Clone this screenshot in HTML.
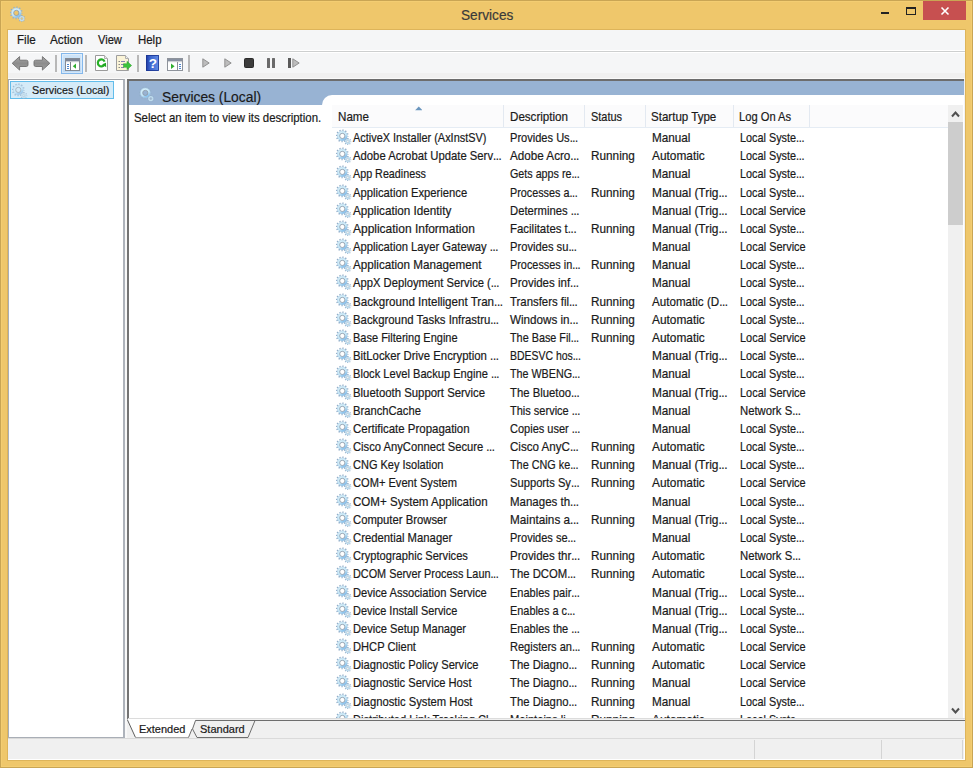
<!DOCTYPE html>
<html><head><meta charset="utf-8">
<style>
*{box-sizing:border-box}
html,body{margin:0;padding:0}
body{width:973px;height:768px;overflow:hidden;position:relative;background:#EFC76B;font-family:"Liberation Sans",sans-serif;color:#1a1a1a}
.a{position:absolute}
.t{position:absolute;white-space:nowrap;line-height:1;-webkit-text-stroke:.2px currentColor;transform-origin:0 0}
.t b{font-weight:normal;letter-spacing:-.4px}
#client{left:8px;top:30px;width:957px;height:730px;background:#F0F0F0}
#menubar{left:8px;top:30px;width:957px;height:21px;background:#F5F6F7}
#menuline{left:8px;top:50px;width:957px;height:3px;background:#CDCFCF;border-top:1px solid #fff;border-bottom:1px solid #fff}
#toolbar{left:8px;top:53px;width:957px;height:20px;background:#F5F6F7}
#lpane{left:8px;top:79px;width:117px;height:659px;background:#fff;border:1px solid #A9AEB6;border-right:2px solid #AEB3BB;border-top-color:#A0A3A8}
#rpane{left:127px;top:79px;width:838px;height:641px;background:#fff;border-top:2px solid #6D6D6D;border-left:2px solid #747474}
#pgap{left:125px;top:79px;width:2px;height:659px;background:#F8F8F8}
#band{left:8px;top:78px;width:957px;height:1px;background:#FAFAFA}
#bluebar{left:129px;top:81px;width:835px;height:24px;background:#98B3D3}
#listtab{left:322px;top:95px;width:642px;height:625px;background:#fff;border-top-left-radius:10px}
#lhdr{left:332px;top:105px;width:616px;height:23px;background:#FBFBFC;border-bottom:1px solid #E5ECF4}
.vd{position:absolute;top:105px;width:1px;height:22px;background:#E3E9F1}
#sb{left:948px;top:105px;width:15px;height:614px;background:#F0F0F0}
#thumb{left:948px;top:122px;width:14.5px;height:103px;background:#CDCDCD}
#bline{left:128px;top:718px;width:837px;height:1px;background:#DCDCDC}
#status{left:8px;top:738px;width:957px;height:22px;background:#F0F0F0;border-top:1px solid #DADADA;border-bottom:1px solid #fff;border-right:1px solid #fff}
.menu{font-size:12.1px;top:34px;transform:scaleX(.94);transform-origin:0 0;color:#1a1a1a}
.r{position:absolute;left:0;height:18px;width:620px}
.r span{position:absolute;top:4px;font-size:12.1px;line-height:1;white-space:nowrap;-webkit-text-stroke:.2px currentColor;transform:scaleX(.92);transform-origin:0 0}
.gi{position:absolute;left:336px;top:1px;width:16px;height:16px}
.c1{left:353px}.c2{left:510px}.c3{left:591px}.c4{left:651.7px}.c5{left:739.5px}
.r b{font-weight:normal;letter-spacing:-.4px}
#rows{position:absolute;left:0;top:128px;width:973px;height:590px;overflow:hidden}
</style></head><body>
<svg width="0" height="0" style="position:absolute">
<defs>
<linearGradient id="gg" x1="0" y1="0" x2="0.6" y2="1"><stop offset="0" stop-color="#D6F0FB"/><stop offset="0.7" stop-color="#C3E6F8"/><stop offset="1" stop-color="#8CC4EE"/></linearGradient>
<symbol id="gear" viewBox="0 0 16 16">
<circle cx="6.3" cy="6.9" r="5.6" fill="none" stroke="#93AFCA" stroke-width="1.7" stroke-dasharray="1.25 1.682" stroke-dashoffset="0.625"/>
<circle cx="6.3" cy="6.9" r="3.75" fill="none" stroke="url(#gg)" stroke-width="2.5"/>
<circle cx="6.3" cy="6.9" r="4.95" fill="none" stroke="#A6C6DF" stroke-width="0.5"/>
<circle cx="6.3" cy="6.9" r="2.6" fill="none" stroke="#8B97A5" stroke-width="0.8"/>
<circle cx="11.8" cy="12.6" r="2.9" fill="none" stroke="#93AFCA" stroke-width="1.3" stroke-dasharray="1.05 1.228" stroke-dashoffset="0.525"/>
<circle cx="11.8" cy="12.6" r="1.85" fill="none" stroke="#BFDDEF" stroke-width="1.5"/>
<circle cx="11.8" cy="12.6" r="1" fill="none" stroke="#A9B8C6" stroke-width="0.5"/>
</symbol>
</defs></svg>

<!-- window frame -->
<div class="a" style="left:1px;top:1px;width:971px;height:766px;border:1px solid #F3CD72"></div>
<div class="a" style="left:0;top:0;width:973px;height:1px;background:#C9A554"></div>
<div class="a" style="left:0;top:0;width:1px;height:768px;background:#C9A554"></div>
<div class="a" style="left:972px;top:0;width:1px;height:768px;background:#C9A554"></div>
<div class="a" style="left:0;top:767px;width:973px;height:1px;background:#C9A554"></div>
<svg class="a" style="left:9.5px;top:6.2px" width="16" height="16" viewBox="0 0 16 16"><use href="#gear"/></svg>
<!-- caption buttons -->
<div class="a" style="left:881px;top:12px;width:8px;height:2px;background:#222"></div>
<div class="a" style="left:906px;top:7px;width:10px;height:8px;border:1px solid #222;border-top-width:2px"></div>
<div class="a" style="left:923px;top:1px;width:43px;height:19px;background:#C75050"></div>
<svg class="a" style="left:940px;top:6px" width="10" height="10" viewBox="0 0 10 10"><path d="M1.5 1.5L8.5 8.5M8.5 1.5L1.5 8.5" stroke="#fff" stroke-width="1.6"/></svg>

<div class="a" style="left:7px;top:29px;width:959px;height:732px;border:1px solid #DDB45A"></div>
<div id="client" class="a"></div>
<div id="menubar" class="a"></div>
<div id="menuline" class="a"></div>
<div id="toolbar" class="a"></div>

<!-- toolbar icons -->
<svg class="a" style="left:11px;top:55px" width="18" height="17" viewBox="0 0 18 17"><defs><linearGradient id="ag" x1="0" y1="0" x2="0" y2="1"><stop offset="0" stop-color="#A8A8A8"/><stop offset=".5" stop-color="#8C8C8C"/><stop offset="1" stop-color="#A0A0A0"/></linearGradient></defs><path d="M1.2 8.3L8.6 1.6V5.2H15.4Q17 5.2 17 6.8V9.8Q17 11.5 15.4 11.5H8.6V15.1Z" fill="url(#ag)" stroke="#6F6F6F" stroke-width="0.9" stroke-linejoin="round"/></svg>
<svg class="a" style="left:33px;top:55px" width="18" height="17" viewBox="0 0 18 17"><path d="M16.8 8.3L9.4 1.6V5.2H2.6Q1 5.2 1 6.8V9.8Q1 11.5 2.6 11.5H9.4V15.1Z" fill="url(#ag)" stroke="#6F6F6F" stroke-width="0.9" stroke-linejoin="round"/></svg>
<div class="a" style="left:55px;top:55px;width:2px;height:17px;background:#B8B8B8"></div>
<div class="a" style="left:61px;top:53px;width:22px;height:21px;background:linear-gradient(#CFE5F9,#BCD9F5);border:1.5px solid #84B8EC;box-shadow:inset 0 0 0 1px rgba(255,255,255,.35)"></div>
<svg class="a" style="left:65px;top:58px" width="15" height="13" viewBox="0 0 15 13"><rect x="0.5" y="0.5" width="14" height="12" fill="#fff" stroke="#858B95"/><rect x="1" y="1" width="13" height="2" fill="#7C8698"/><rect x="1" y="3" width="13" height="1.2" fill="#C8CCD2"/><rect x="5" y="4" width="1" height="8.5" fill="#7A7F88"/><path d="M2 6.5h2M2 8.5h2M2 10.5h2" stroke="#4D86CF"/><path d="M11 5.6V10.8L7.8 8.2Z" fill="#2FAE2F"/></svg>
<div class="a" style="left:85px;top:55px;width:2px;height:17px;background:#B8B8B8"></div>
<svg class="a" style="left:95px;top:55px" width="13" height="16" viewBox="0 0 13 16"><path d="M0.5 0.5H9.5L12.5 3.5V15.5H0.5Z" fill="#fff" stroke="#9A9A9A"/><path d="M9.5 0.5V3.5H12.5" fill="#E8E8E8" stroke="#B0B0B0"/><path d="M9.4 9.6A3.5 3.5 0 1 1 9.6 6.6" fill="none" stroke="#27B027" stroke-width="2.2"/><path d="M7.2 9.2L11.2 12.3L11 7.8Z" fill="#1FA51F"/></svg>
<svg class="a" style="left:116px;top:55px" width="16" height="16" viewBox="0 0 16 16"><path d="M0.5 0.5H9.5L12.5 3.5V15.5H0.5Z" fill="#FBF4D8" stroke="#9E9E9E"/><path d="M9.5 0.5V3.5H12.5" fill="#EEE" stroke="#B0B0B0"/><path d="M2.5 6.5h1.5M2.5 9.5h1.5M2.5 12.5h1.5" stroke="#8A8A8A"/><path d="M5 6.5h4M5 9.5h3M5 12.5h3" stroke="#8884B4"/><path d="M7.5 8.7H11V6.3L15.6 10.5L11 14.7V12.3H7.5Z" fill="#3CC33C" stroke="#2A9F2A" stroke-width=".5"/></svg>
<div class="a" style="left:137px;top:55px;width:2px;height:17px;background:#B8B8B8"></div>
<svg class="a" style="left:146px;top:55px" width="13" height="16" viewBox="0 0 13 16"><defs><linearGradient id="hg" x1="0" y1="0" x2="1" y2="0"><stop offset="0" stop-color="#1A37A0"/><stop offset=".3" stop-color="#3A62CC"/><stop offset="1" stop-color="#628EE6"/></linearGradient></defs><rect x="0" y="0" width="13" height="16" rx="0.8" fill="url(#hg)"/><rect x="0.5" y="0.5" width="12" height="15" fill="none" stroke="#1B3591" stroke-width=".8"/><text x="6.9" y="12.6" font-family="Liberation Sans" font-size="13.5" font-weight="bold" fill="#fff" text-anchor="middle">?</text></svg>
<svg class="a" style="left:167px;top:58px" width="16" height="13" viewBox="0 0 16 13"><rect x="0.5" y="0.5" width="15" height="12" fill="#fff" stroke="#8E939B"/><rect x="1" y="1" width="14" height="2" fill="#8790A0"/><rect x="1" y="3" width="14" height="1.2" fill="#CDD0D5"/><rect x="10" y="4" width="1" height="8.5" fill="#8A8F96"/><path d="M12 6.5h2M12 8.5h2M12 10.5h2" stroke="#4D86CF"/><path d="M4 5.6V11L7.6 8.3Z" fill="#2FAE2F"/></svg>
<div class="a" style="left:188px;top:55px;width:2px;height:17px;background:#B8B8B8"></div>
<svg class="a" style="left:202px;top:58px" width="8" height="10" viewBox="0 0 8 10"><path d="M0.8 0.8V9.2L7.2 5Z" fill="#BDBDBD" stroke="#8A8A8A" stroke-width="0.9"/></svg>
<svg class="a" style="left:224px;top:58px" width="8" height="10" viewBox="0 0 8 10"><path d="M0.8 0.8V9.2L7.2 5Z" fill="#BDBDBD" stroke="#8A8A8A" stroke-width="0.9"/></svg>
<div class="a" style="left:244px;top:58px;width:10px;height:10px;background:#3C3C3C;border:1px solid #2A2A2A;border-radius:1.5px"></div>
<div class="a" style="left:267px;top:58px;width:3px;height:10px;background:#6A6A6A;border-radius:.5px"></div>
<div class="a" style="left:272px;top:58px;width:3px;height:10px;background:#6A6A6A;border-radius:.5px"></div>
<div class="a" style="left:288px;top:58px;width:3px;height:10px;background:#5A5A5A"></div>
<svg class="a" style="left:292px;top:58px" width="8" height="10" viewBox="0 0 8 10"><path d="M0.8 0.8V9.2L7.2 5Z" fill="#BDBDBD" stroke="#8A8A8A" stroke-width="0.9"/></svg>

<!-- left pane -->
<div id="band" class="a"></div>
<div id="lpane" class="a"></div>
<div class="a" style="left:10px;top:81px;width:104px;height:18px;background:#D5EBF8;border:1.5px solid #62BDEB"></div>
<svg class="a" style="left:12px;top:83px;opacity:.75" width="16" height="16" viewBox="0 0 16 16"><use href="#gear"/></svg>

<!-- right pane -->
<div id="pgap" class="a"></div>
<div id="rpane" class="a"></div>
<div id="bluebar" class="a"></div>
<svg class="a" style="left:138.7px;top:85.7px" width="16" height="16" viewBox="0 0 16 16"><use href="#gear"/></svg>
<div id="listtab" class="a"></div>
<div id="lhdr" class="a"></div>
<svg class="a" style="left:414.7px;top:106px" width="7.5" height="4.5" viewBox="0 0 8 5"><path d="M0 4.7L4 0.5L8 4.7Z" fill="#6A96BE"/></svg>
<div class="vd" style="left:503px"></div>
<div class="vd" style="left:584px"></div>
<div class="vd" style="left:645px"></div>
<div class="vd" style="left:733px"></div>
<div class="vd" style="left:809px"></div>
<div id="rows">
<div style="position:absolute;left:0;top:-128px;width:973px">
<div style="position:absolute;left:0;top:128px">
<svg class="gi" style="top:1.00px"><use href="#gear"/></svg>
<svg class="gi" style="top:19.18px"><use href="#gear"/></svg>
<svg class="gi" style="top:37.36px"><use href="#gear"/></svg>
<svg class="gi" style="top:55.54px"><use href="#gear"/></svg>
<svg class="gi" style="top:73.72px"><use href="#gear"/></svg>
<svg class="gi" style="top:91.90px"><use href="#gear"/></svg>
<svg class="gi" style="top:110.08px"><use href="#gear"/></svg>
<svg class="gi" style="top:128.26px"><use href="#gear"/></svg>
<svg class="gi" style="top:146.44px"><use href="#gear"/></svg>
<svg class="gi" style="top:164.62px"><use href="#gear"/></svg>
<svg class="gi" style="top:182.80px"><use href="#gear"/></svg>
<svg class="gi" style="top:200.98px"><use href="#gear"/></svg>
<svg class="gi" style="top:219.16px"><use href="#gear"/></svg>
<svg class="gi" style="top:237.34px"><use href="#gear"/></svg>
<svg class="gi" style="top:255.52px"><use href="#gear"/></svg>
<svg class="gi" style="top:273.70px"><use href="#gear"/></svg>
<svg class="gi" style="top:291.88px"><use href="#gear"/></svg>
<svg class="gi" style="top:310.06px"><use href="#gear"/></svg>
<svg class="gi" style="top:328.24px"><use href="#gear"/></svg>
<svg class="gi" style="top:346.42px"><use href="#gear"/></svg>
<svg class="gi" style="top:364.60px"><use href="#gear"/></svg>
<svg class="gi" style="top:382.78px"><use href="#gear"/></svg>
<svg class="gi" style="top:400.96px"><use href="#gear"/></svg>
<svg class="gi" style="top:419.14px"><use href="#gear"/></svg>
<svg class="gi" style="top:437.32px"><use href="#gear"/></svg>
<svg class="gi" style="top:455.50px"><use href="#gear"/></svg>
<svg class="gi" style="top:473.68px"><use href="#gear"/></svg>
<svg class="gi" style="top:491.86px"><use href="#gear"/></svg>
<svg class="gi" style="top:510.04px"><use href="#gear"/></svg>
<svg class="gi" style="top:528.22px"><use href="#gear"/></svg>
<svg class="gi" style="top:546.40px"><use href="#gear"/></svg>
<svg class="gi" style="top:564.58px"><use href="#gear"/></svg>
<svg class="gi" style="top:582.76px"><use href="#gear"/></svg>
<div class="t" style="left:353.40px;top:4.00px;font-size:12.1px;transform:scaleX(0.902)">ActiveX Installer (AxInstSV)</div>
<div class="t" style="left:510.30px;top:4.00px;font-size:12.1px;transform:scaleX(0.915)">Provides Us<b>...</b></div>
<div class="t" style="left:651.80px;top:4.00px;font-size:12.1px;transform:scaleX(0.969)">Manual</div>
<div class="t" style="left:740.00px;top:4.00px;font-size:12.1px;transform:scaleX(0.897)">Local Syste<b>...</b></div>
<div class="t" style="left:353.40px;top:22.18px;font-size:12.1px;transform:scaleX(0.934)">Adobe Acrobat Update Serv<b>...</b></div>
<div class="t" style="left:510.30px;top:22.18px;font-size:12.1px;transform:scaleX(0.965)">Adobe Acro<b>...</b></div>
<div class="t" style="left:591.40px;top:22.18px;font-size:12.1px;transform:scaleX(0.974)">Running</div>
<div class="t" style="left:651.80px;top:22.18px;font-size:12.1px;transform:scaleX(0.982)">Automatic</div>
<div class="t" style="left:740.00px;top:22.18px;font-size:12.1px;transform:scaleX(0.897)">Local Syste<b>...</b></div>
<div class="t" style="left:353.40px;top:40.36px;font-size:12.1px;transform:scaleX(0.889)">App Readiness</div>
<div class="t" style="left:510.30px;top:40.36px;font-size:12.1px;transform:scaleX(0.887)">Gets apps re<b>...</b></div>
<div class="t" style="left:651.80px;top:40.36px;font-size:12.1px;transform:scaleX(0.969)">Manual</div>
<div class="t" style="left:740.00px;top:40.36px;font-size:12.1px;transform:scaleX(0.897)">Local Syste<b>...</b></div>
<div class="t" style="left:353.40px;top:58.54px;font-size:12.1px;transform:scaleX(0.928)">Application Experience</div>
<div class="t" style="left:510.30px;top:58.54px;font-size:12.1px;transform:scaleX(0.893)">Processes a<b>...</b></div>
<div class="t" style="left:591.40px;top:58.54px;font-size:12.1px;transform:scaleX(0.974)">Running</div>
<div class="t" style="left:651.80px;top:58.54px;font-size:12.1px;transform:scaleX(0.985)">Manual (Trig<b>...</b></div>
<div class="t" style="left:740.00px;top:58.54px;font-size:12.1px;transform:scaleX(0.897)">Local Syste<b>...</b></div>
<div class="t" style="left:353.40px;top:76.72px;font-size:12.1px;transform:scaleX(0.968)">Application Identity</div>
<div class="t" style="left:510.30px;top:76.72px;font-size:12.1px;transform:scaleX(0.931)">Determines <b>...</b></div>
<div class="t" style="left:651.80px;top:76.72px;font-size:12.1px;transform:scaleX(0.985)">Manual (Trig<b>...</b></div>
<div class="t" style="left:740.00px;top:76.72px;font-size:12.1px;transform:scaleX(0.904)">Local Service</div>
<div class="t" style="left:353.40px;top:94.90px;font-size:12.1px;transform:scaleX(0.990)">Application Information</div>
<div class="t" style="left:510.30px;top:94.90px;font-size:12.1px;transform:scaleX(0.945)">Facilitates t<b>...</b></div>
<div class="t" style="left:591.40px;top:94.90px;font-size:12.1px;transform:scaleX(0.974)">Running</div>
<div class="t" style="left:651.80px;top:94.90px;font-size:12.1px;transform:scaleX(0.985)">Manual (Trig<b>...</b></div>
<div class="t" style="left:740.00px;top:94.90px;font-size:12.1px;transform:scaleX(0.897)">Local Syste<b>...</b></div>
<div class="t" style="left:353.40px;top:113.08px;font-size:12.1px;transform:scaleX(0.929)">Application Layer Gateway <b>...</b></div>
<div class="t" style="left:510.30px;top:113.08px;font-size:12.1px;transform:scaleX(0.924)">Provides su<b>...</b></div>
<div class="t" style="left:651.80px;top:113.08px;font-size:12.1px;transform:scaleX(0.969)">Manual</div>
<div class="t" style="left:740.00px;top:113.08px;font-size:12.1px;transform:scaleX(0.904)">Local Service</div>
<div class="t" style="left:353.40px;top:131.26px;font-size:12.1px;transform:scaleX(0.965)">Application Management</div>
<div class="t" style="left:510.30px;top:131.26px;font-size:12.1px;transform:scaleX(0.899)">Processes in<b>...</b></div>
<div class="t" style="left:591.40px;top:131.26px;font-size:12.1px;transform:scaleX(0.974)">Running</div>
<div class="t" style="left:651.80px;top:131.26px;font-size:12.1px;transform:scaleX(0.969)">Manual</div>
<div class="t" style="left:740.00px;top:131.26px;font-size:12.1px;transform:scaleX(0.897)">Local Syste<b>...</b></div>
<div class="t" style="left:353.40px;top:149.44px;font-size:12.1px;transform:scaleX(0.928)">AppX Deployment Service (<b>...</b></div>
<div class="t" style="left:510.30px;top:149.44px;font-size:12.1px;transform:scaleX(0.951)">Provides inf<b>...</b></div>
<div class="t" style="left:651.80px;top:149.44px;font-size:12.1px;transform:scaleX(0.969)">Manual</div>
<div class="t" style="left:740.00px;top:149.44px;font-size:12.1px;transform:scaleX(0.897)">Local Syste<b>...</b></div>
<div class="t" style="left:353.40px;top:167.62px;font-size:12.1px;transform:scaleX(0.958)">Background Intelligent Tran<b>...</b></div>
<div class="t" style="left:510.30px;top:167.62px;font-size:12.1px;transform:scaleX(0.941)">Transfers fil<b>...</b></div>
<div class="t" style="left:591.40px;top:167.62px;font-size:12.1px;transform:scaleX(0.974)">Running</div>
<div class="t" style="left:651.80px;top:167.62px;font-size:12.1px;transform:scaleX(0.961)">Automatic (D<b>...</b></div>
<div class="t" style="left:740.00px;top:167.62px;font-size:12.1px;transform:scaleX(0.897)">Local Syste<b>...</b></div>
<div class="t" style="left:353.40px;top:185.80px;font-size:12.1px;transform:scaleX(0.938)">Background Tasks Infrastru<b>...</b></div>
<div class="t" style="left:510.30px;top:185.80px;font-size:12.1px;transform:scaleX(0.964)">Windows in<b>...</b></div>
<div class="t" style="left:591.40px;top:185.80px;font-size:12.1px;transform:scaleX(0.974)">Running</div>
<div class="t" style="left:651.80px;top:185.80px;font-size:12.1px;transform:scaleX(0.982)">Automatic</div>
<div class="t" style="left:740.00px;top:185.80px;font-size:12.1px;transform:scaleX(0.897)">Local Syste<b>...</b></div>
<div class="t" style="left:353.40px;top:203.98px;font-size:12.1px;transform:scaleX(0.910)">Base Filtering Engine</div>
<div class="t" style="left:510.30px;top:203.98px;font-size:12.1px;transform:scaleX(0.895)">The Base Fil<b>...</b></div>
<div class="t" style="left:591.40px;top:203.98px;font-size:12.1px;transform:scaleX(0.974)">Running</div>
<div class="t" style="left:651.80px;top:203.98px;font-size:12.1px;transform:scaleX(0.982)">Automatic</div>
<div class="t" style="left:740.00px;top:203.98px;font-size:12.1px;transform:scaleX(0.904)">Local Service</div>
<div class="t" style="left:353.40px;top:222.16px;font-size:12.1px;transform:scaleX(0.940)">BitLocker Drive Encryption <b>...</b></div>
<div class="t" style="left:510.30px;top:222.16px;font-size:12.1px;transform:scaleX(0.865)">BDESVC hos<b>...</b></div>
<div class="t" style="left:651.80px;top:222.16px;font-size:12.1px;transform:scaleX(0.985)">Manual (Trig<b>...</b></div>
<div class="t" style="left:740.00px;top:222.16px;font-size:12.1px;transform:scaleX(0.897)">Local Syste<b>...</b></div>
<div class="t" style="left:353.40px;top:240.34px;font-size:12.1px;transform:scaleX(0.920)">Block Level Backup Engine <b>...</b></div>
<div class="t" style="left:510.30px;top:240.34px;font-size:12.1px;transform:scaleX(0.887)">The WBENG<b>...</b></div>
<div class="t" style="left:651.80px;top:240.34px;font-size:12.1px;transform:scaleX(0.969)">Manual</div>
<div class="t" style="left:740.00px;top:240.34px;font-size:12.1px;transform:scaleX(0.897)">Local Syste<b>...</b></div>
<div class="t" style="left:353.40px;top:258.52px;font-size:12.1px;transform:scaleX(0.940)">Bluetooth Support Service</div>
<div class="t" style="left:510.30px;top:258.52px;font-size:12.1px;transform:scaleX(0.935)">The Bluetoo<b>...</b></div>
<div class="t" style="left:651.80px;top:258.52px;font-size:12.1px;transform:scaleX(0.985)">Manual (Trig<b>...</b></div>
<div class="t" style="left:740.00px;top:258.52px;font-size:12.1px;transform:scaleX(0.904)">Local Service</div>
<div class="t" style="left:353.40px;top:276.70px;font-size:12.1px;transform:scaleX(0.926)">BranchCache</div>
<div class="t" style="left:510.30px;top:276.70px;font-size:12.1px;transform:scaleX(0.910)">This service <b>...</b></div>
<div class="t" style="left:651.80px;top:276.70px;font-size:12.1px;transform:scaleX(0.969)">Manual</div>
<div class="t" style="left:740.00px;top:276.70px;font-size:12.1px;transform:scaleX(0.936)">Network S<b>...</b></div>
<div class="t" style="left:353.40px;top:294.88px;font-size:12.1px;transform:scaleX(0.948)">Certificate Propagation</div>
<div class="t" style="left:510.30px;top:294.88px;font-size:12.1px;transform:scaleX(0.910)">Copies user <b>...</b></div>
<div class="t" style="left:651.80px;top:294.88px;font-size:12.1px;transform:scaleX(0.969)">Manual</div>
<div class="t" style="left:740.00px;top:294.88px;font-size:12.1px;transform:scaleX(0.897)">Local Syste<b>...</b></div>
<div class="t" style="left:353.40px;top:313.06px;font-size:12.1px;transform:scaleX(0.927)">Cisco AnyConnect Secure <b>...</b></div>
<div class="t" style="left:510.30px;top:313.06px;font-size:12.1px;transform:scaleX(0.958)">Cisco AnyC<b>...</b></div>
<div class="t" style="left:591.40px;top:313.06px;font-size:12.1px;transform:scaleX(0.974)">Running</div>
<div class="t" style="left:651.80px;top:313.06px;font-size:12.1px;transform:scaleX(0.982)">Automatic</div>
<div class="t" style="left:740.00px;top:313.06px;font-size:12.1px;transform:scaleX(0.897)">Local Syste<b>...</b></div>
<div class="t" style="left:353.40px;top:331.24px;font-size:12.1px;transform:scaleX(0.909)">CNG Key Isolation</div>
<div class="t" style="left:510.30px;top:331.24px;font-size:12.1px;transform:scaleX(0.895)">The CNG ke<b>...</b></div>
<div class="t" style="left:591.40px;top:331.24px;font-size:12.1px;transform:scaleX(0.974)">Running</div>
<div class="t" style="left:651.80px;top:331.24px;font-size:12.1px;transform:scaleX(0.985)">Manual (Trig<b>...</b></div>
<div class="t" style="left:740.00px;top:331.24px;font-size:12.1px;transform:scaleX(0.897)">Local Syste<b>...</b></div>
<div class="t" style="left:353.40px;top:349.42px;font-size:12.1px;transform:scaleX(0.918)">COM+ Event System</div>
<div class="t" style="left:510.30px;top:349.42px;font-size:12.1px;transform:scaleX(0.925)">Supports Sy<b>...</b></div>
<div class="t" style="left:591.40px;top:349.42px;font-size:12.1px;transform:scaleX(0.974)">Running</div>
<div class="t" style="left:651.80px;top:349.42px;font-size:12.1px;transform:scaleX(0.982)">Automatic</div>
<div class="t" style="left:740.00px;top:349.42px;font-size:12.1px;transform:scaleX(0.904)">Local Service</div>
<div class="t" style="left:353.40px;top:367.60px;font-size:12.1px;transform:scaleX(0.956)">COM+ System Application</div>
<div class="t" style="left:510.30px;top:367.60px;font-size:12.1px;transform:scaleX(0.951)">Manages th<b>...</b></div>
<div class="t" style="left:651.80px;top:367.60px;font-size:12.1px;transform:scaleX(0.969)">Manual</div>
<div class="t" style="left:740.00px;top:367.60px;font-size:12.1px;transform:scaleX(0.897)">Local Syste<b>...</b></div>
<div class="t" style="left:353.40px;top:385.78px;font-size:12.1px;transform:scaleX(0.933)">Computer Browser</div>
<div class="t" style="left:510.30px;top:385.78px;font-size:12.1px;transform:scaleX(0.971)">Maintains a<b>...</b></div>
<div class="t" style="left:591.40px;top:385.78px;font-size:12.1px;transform:scaleX(0.974)">Running</div>
<div class="t" style="left:651.80px;top:385.78px;font-size:12.1px;transform:scaleX(0.985)">Manual (Trig<b>...</b></div>
<div class="t" style="left:740.00px;top:385.78px;font-size:12.1px;transform:scaleX(0.897)">Local Syste<b>...</b></div>
<div class="t" style="left:353.40px;top:403.96px;font-size:12.1px;transform:scaleX(0.934)">Credential Manager</div>
<div class="t" style="left:510.30px;top:403.96px;font-size:12.1px;transform:scaleX(0.910)">Provides se<b>...</b></div>
<div class="t" style="left:651.80px;top:403.96px;font-size:12.1px;transform:scaleX(0.969)">Manual</div>
<div class="t" style="left:740.00px;top:403.96px;font-size:12.1px;transform:scaleX(0.897)">Local Syste<b>...</b></div>
<div class="t" style="left:353.40px;top:422.14px;font-size:12.1px;transform:scaleX(0.919)">Cryptographic Services</div>
<div class="t" style="left:510.30px;top:422.14px;font-size:12.1px;transform:scaleX(0.950)">Provides thr<b>...</b></div>
<div class="t" style="left:591.40px;top:422.14px;font-size:12.1px;transform:scaleX(0.974)">Running</div>
<div class="t" style="left:651.80px;top:422.14px;font-size:12.1px;transform:scaleX(0.982)">Automatic</div>
<div class="t" style="left:740.00px;top:422.14px;font-size:12.1px;transform:scaleX(0.936)">Network S<b>...</b></div>
<div class="t" style="left:353.40px;top:440.32px;font-size:12.1px;transform:scaleX(0.897)">DCOM Server Process Laun<b>...</b></div>
<div class="t" style="left:510.30px;top:440.32px;font-size:12.1px;transform:scaleX(0.936)">The DCOM<b>...</b></div>
<div class="t" style="left:591.40px;top:440.32px;font-size:12.1px;transform:scaleX(0.974)">Running</div>
<div class="t" style="left:651.80px;top:440.32px;font-size:12.1px;transform:scaleX(0.982)">Automatic</div>
<div class="t" style="left:740.00px;top:440.32px;font-size:12.1px;transform:scaleX(0.897)">Local Syste<b>...</b></div>
<div class="t" style="left:353.40px;top:458.50px;font-size:12.1px;transform:scaleX(0.921)">Device Association Service</div>
<div class="t" style="left:510.30px;top:458.50px;font-size:12.1px;transform:scaleX(0.912)">Enables pair<b>...</b></div>
<div class="t" style="left:651.80px;top:458.50px;font-size:12.1px;transform:scaleX(0.985)">Manual (Trig<b>...</b></div>
<div class="t" style="left:740.00px;top:458.50px;font-size:12.1px;transform:scaleX(0.897)">Local Syste<b>...</b></div>
<div class="t" style="left:353.40px;top:476.68px;font-size:12.1px;transform:scaleX(0.902)">Device Install Service</div>
<div class="t" style="left:510.30px;top:476.68px;font-size:12.1px;transform:scaleX(0.901)">Enables a c<b>...</b></div>
<div class="t" style="left:651.80px;top:476.68px;font-size:12.1px;transform:scaleX(0.985)">Manual (Trig<b>...</b></div>
<div class="t" style="left:740.00px;top:476.68px;font-size:12.1px;transform:scaleX(0.897)">Local Syste<b>...</b></div>
<div class="t" style="left:353.40px;top:494.86px;font-size:12.1px;transform:scaleX(0.919)">Device Setup Manager</div>
<div class="t" style="left:510.30px;top:494.86px;font-size:12.1px;transform:scaleX(0.912)">Enables the <b>...</b></div>
<div class="t" style="left:651.80px;top:494.86px;font-size:12.1px;transform:scaleX(0.985)">Manual (Trig<b>...</b></div>
<div class="t" style="left:740.00px;top:494.86px;font-size:12.1px;transform:scaleX(0.897)">Local Syste<b>...</b></div>
<div class="t" style="left:353.40px;top:513.04px;font-size:12.1px;transform:scaleX(0.921)">DHCP Client</div>
<div class="t" style="left:510.30px;top:513.04px;font-size:12.1px;transform:scaleX(0.912)">Registers an<b>...</b></div>
<div class="t" style="left:591.40px;top:513.04px;font-size:12.1px;transform:scaleX(0.974)">Running</div>
<div class="t" style="left:651.80px;top:513.04px;font-size:12.1px;transform:scaleX(0.982)">Automatic</div>
<div class="t" style="left:740.00px;top:513.04px;font-size:12.1px;transform:scaleX(0.904)">Local Service</div>
<div class="t" style="left:353.40px;top:531.22px;font-size:12.1px;transform:scaleX(0.924)">Diagnostic Policy Service</div>
<div class="t" style="left:510.30px;top:531.22px;font-size:12.1px;transform:scaleX(0.935)">The Diagno<b>...</b></div>
<div class="t" style="left:591.40px;top:531.22px;font-size:12.1px;transform:scaleX(0.974)">Running</div>
<div class="t" style="left:651.80px;top:531.22px;font-size:12.1px;transform:scaleX(0.982)">Automatic</div>
<div class="t" style="left:740.00px;top:531.22px;font-size:12.1px;transform:scaleX(0.904)">Local Service</div>
<div class="t" style="left:353.40px;top:549.40px;font-size:12.1px;transform:scaleX(0.923)">Diagnostic Service Host</div>
<div class="t" style="left:510.30px;top:549.40px;font-size:12.1px;transform:scaleX(0.935)">The Diagno<b>...</b></div>
<div class="t" style="left:591.40px;top:549.40px;font-size:12.1px;transform:scaleX(0.974)">Running</div>
<div class="t" style="left:651.80px;top:549.40px;font-size:12.1px;transform:scaleX(0.969)">Manual</div>
<div class="t" style="left:740.00px;top:549.40px;font-size:12.1px;transform:scaleX(0.904)">Local Service</div>
<div class="t" style="left:353.40px;top:567.58px;font-size:12.1px;transform:scaleX(0.930)">Diagnostic System Host</div>
<div class="t" style="left:510.30px;top:567.58px;font-size:12.1px;transform:scaleX(0.935)">The Diagno<b>...</b></div>
<div class="t" style="left:591.40px;top:567.58px;font-size:12.1px;transform:scaleX(0.974)">Running</div>
<div class="t" style="left:651.80px;top:567.58px;font-size:12.1px;transform:scaleX(0.969)">Manual</div>
<div class="t" style="left:740.00px;top:567.58px;font-size:12.1px;transform:scaleX(0.897)">Local Syste<b>...</b></div>
<div class="t" style="left:353.40px;top:585.76px;font-size:12.1px;transform:scaleX(0.920)">Distributed Link Tracking Cl<b>...</b></div>
<div class="t" style="left:510.30px;top:585.76px;font-size:12.1px;transform:scaleX(0.920)">Maintains li<b>...</b></div>
<div class="t" style="left:591.40px;top:585.76px;font-size:12.1px;transform:scaleX(0.974)">Running</div>
<div class="t" style="left:651.80px;top:585.76px;font-size:12.1px;transform:scaleX(0.982)">Automatic</div>
<div class="t" style="left:740.00px;top:585.76px;font-size:12.1px;transform:scaleX(0.897)">Local Syste<b>...</b></div>
</div></div></div>
<div id="sb" class="a"></div>
<div class="a" style="left:963.5px;top:79px;width:1.5px;height:641px;background:#F2F2F2"></div>
<div id="thumb" class="a"></div>
<svg class="a" style="left:951px;top:110px" width="9" height="8" viewBox="0 0 9 8"><path d="M1 6.5L4.5 2.5L8 6.5" fill="none" stroke="#505050" stroke-width="2"/></svg>
<svg class="a" style="left:951px;top:706.5px" width="9" height="8" viewBox="0 0 9 8"><path d="M1 1.5L4.5 5.5L8 1.5" fill="none" stroke="#505050" stroke-width="2"/></svg>
<div id="bline" class="a"></div>

<!-- tabs -->
<div class="a" style="left:128px;top:719px;width:837px;height:19px;background:#F0F0F0"></div>
<div class="a" style="left:195px;top:720px;width:770px;height:1px;background:#6E6E6E"></div>
<svg class="a" style="left:120px;top:716px" width="150" height="24" viewBox="0 0 150 24"><path d="M7.5 3V4.5L15.5 21.5H68.5L75.5 4.5V3Z" fill="#fff"/><path d="M7.5 4L15.5 21.5" fill="none" stroke="#5E5E5E" stroke-width="1"/><path d="M15.5 21.5H68.5" fill="none" stroke="#A9A9A9" stroke-width="1"/><path d="M68.5 21.5L72 13" fill="none" stroke="#6E6E6E" stroke-width="1"/><path d="M135 4.5L128 21.5H77L72.5 13L75.5 4.5Z" fill="#F0F0F0" stroke="#6E6E6E" stroke-width="1"/></svg>

<!-- status bar -->
<div id="status" class="a"></div>
<div class="a" style="left:754px;top:740px;width:1px;height:19px;background:#D4D4D4"></div><div class="a" style="left:881px;top:740px;width:1px;height:19px;background:#D4D4D4"></div><div class="a" style="left:962px;top:740px;width:1px;height:19px;background:#D4D4D4"></div>
<div class="t" style="left:461.00px;top:7.90px;font-size:14.3px;transform:scaleX(0.955);color:#3a3a3a">Services</div>
<div class="t" style="left:17.00px;top:34.00px;font-size:12.1px;transform:scaleX(0.961)">File</div>
<div class="t" style="left:49.90px;top:34.00px;font-size:12.1px;transform:scaleX(0.973)">Action</div>
<div class="t" style="left:98.40px;top:34.00px;font-size:12.1px;transform:scaleX(0.919)">View</div>
<div class="t" style="left:137.90px;top:34.00px;font-size:12.1px;transform:scaleX(0.946)">Help</div>
<div class="t" style="left:32.00px;top:85.00px;font-size:11.8px;transform:scaleX(0.914)">Services (Local)</div>
<div class="t" style="left:162.40px;top:88.50px;font-size:15.4px;transform:scaleX(0.898)">Services (Local)</div>
<div class="t" style="left:133.80px;top:112.00px;font-size:12.1px;transform:scaleX(0.944)">Select an item to view its description.</div>
<div class="t" style="left:337.60px;top:111.00px;font-size:12.1px;transform:scaleX(0.961)">Name</div>
<div class="t" style="left:509.90px;top:111.00px;font-size:12.1px;transform:scaleX(0.959)">Description</div>
<div class="t" style="left:591.10px;top:111.00px;font-size:12.1px;transform:scaleX(0.906)">Status</div>
<div class="t" style="left:651.00px;top:111.00px;font-size:12.1px;transform:scaleX(0.955)">Startup Type</div>
<div class="t" style="left:739.40px;top:111.00px;font-size:12.1px;transform:scaleX(0.923)">Log On As</div>
<div class="t" style="left:138.90px;top:724.00px;font-size:11.3px;transform:scaleX(0.972)">Extended</div>
<div class="t" style="left:199.80px;top:724.00px;font-size:11.3px;transform:scaleX(0.976)">Standard</div>
</body></html>
